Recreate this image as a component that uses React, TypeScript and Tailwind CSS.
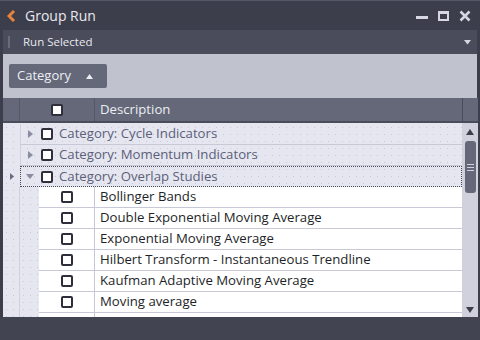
import React from "react";

const dots = {
  backgroundImage: "radial-gradient(circle, rgba(120,125,150,0.28) 0.6px, transparent 0.8px)",
  backgroundSize: "7px 7px",
};

function Box({ className = "" }: { className?: string }) {
  return <div className={"w-[12px] h-[12px] border-2 border-[#2e2f3a] rounded-[2px] bg-white " + className} />;
}

const children = [
  "Bollinger Bands",
  "Double Exponential Moving Average",
  "Exponential Moving Average",
  "Hilbert Transform - Instantaneous Trendline",
  "Kaufman Adaptive Moving Average",
  "Moving average",
];

const cats = [
  { t: "Category: Cycle Indicators", open: false },
  { t: "Category: Momentum Indicators", open: false },
  { t: "Category: Overlap Studies", open: true },
];

export default function App() {
  return (
    <div
      className="w-[480px] h-[340px] bg-[#3d3e4c] flex flex-col overflow-hidden text-[12px]"
      style={{ fontFamily: '"Open Sans", "Noto Sans", sans-serif' }}
    >
      {/* title bar */}
      <div className="h-[30px] flex items-center border-t border-[#555668] shrink-0">
        <svg width="10" height="12" viewBox="0 0 10 12" className="ml-[7px]">
          <path d="M7 1 L2 6 L7 11" stroke="#e9833a" strokeWidth="3" fill="none" />
        </svg>
        <span className="ml-[8px] text-[14px] text-[#e8e9f0]">Group Run</span>
        <div className="ml-auto flex items-center gap-[10px] mr-[9px]">
          <div className="w-[12px] h-[3px] bg-[#d6d7e0] mt-[4px]" />
          <div className="w-[11px] h-[10px] border-2 border-t-[3px] border-[#d6d7e0]" />
          <svg width="12" height="12" viewBox="0 0 12 12">
            <path d="M1.5 1.5 L10.5 10.5 M10.5 1.5 L1.5 10.5" stroke="#d6d7e0" strokeWidth="2.6" />
          </svg>
        </div>
      </div>
      {/* toolbar */}
      <div className="h-[24px] mx-[3px] bg-[#4a4b5b] flex items-center shrink-0">
        <div className="ml-[5px] w-[2px] h-[12px] border-l border-r border-[#6a6b7a]" />
        <span className="ml-[13px] text-[11.5px] text-[#e8e9f0]">Run Selected</span>
        <svg width="7" height="5" viewBox="0 0 7 5" className="ml-auto mr-[6px]">
          <path d="M0 0 H7 L3.5 4.5 Z" fill="#d6d7e0" />
        </svg>
      </div>
      {/* group panel */}
      <div className="h-[44px] mx-[3px] bg-[#c0c2cd] flex items-center pl-[6px] shrink-0">
        <div className="w-[98px] h-[24px] bg-[#646878] rounded-[2px] flex items-center pl-[8px] pr-[14px] text-[13px] text-[#eceef4]">
          Category
          <svg width="7" height="5" viewBox="0 0 7 5" className="ml-auto">
            <path d="M0 5 H7 L3.5 0 Z" fill="#eceef4" />
          </svg>
        </div>
      </div>
      {/* grid */}
      <div className="mx-[3px] flex flex-1 min-h-0 mr-[2px]">
        <div className="flex-1 flex flex-col min-w-0 bg-[#e5e6f0]">
          <div className="h-[25px] bg-[#646878] flex items-center border-b-2 border-[#4a4b5b] shrink-0">
            <div className="w-[17px] h-full border-r border-[#555868]" />
            <div className="w-[75px] h-full border-r border-[#555868] flex items-center justify-center">
              <Box />
            </div>
            <span className="ml-[5px] text-[13.2px] text-[#eceef4]">Description</span>
          </div>
          <div className="flex-1 overflow-hidden flex flex-col pt-px">
            {cats.map((c, i) => (
              <div key={i} className="h-[21px] flex shrink-0" style={dots}>
                <div className="w-[17px] flex items-center justify-center">
                  {c.open && (
                    <svg width="4" height="7" viewBox="0 0 4 7">
                      <path d="M0 0 L4 3.5 L0 7 Z" fill="#6a6c80" />
                    </svg>
                  )}
                </div>
                <div
                  className={
                    "flex-1 flex items-center border-b " +
                    (c.open ? "border border-dotted border-[#4a4b5b]" : "border-[#c8c9d6] border-l border-l-[#d0d1dc]")
                  }
                >
                  <div className="w-[16px] flex items-center justify-center ml-[1px]">
                    {c.open ? (
                      <svg width="8" height="5" viewBox="0 0 8 5">
                        <path d="M0 0 H8 L4 5 Z" fill="#8a8ca0" />
                      </svg>
                    ) : (
                      <svg width="5" height="8" viewBox="0 0 5 8">
                        <path d="M0 0 L5 4 L0 8 Z" fill="#8a8ca0" />
                      </svg>
                    )}
                  </div>
                  <Box className="ml-[3px]" />
                  <span className="ml-[6px] text-[13.2px] text-[#5c5f78]">{c.t}</span>
                </div>
              </div>
            ))}
            {children.concat([""]).map((t, i) => (
              <div key={i} className="h-[21px] flex shrink-0">
                <div className="w-[17px] border-r border-[#d0d1dc]" style={dots} />
                <div className="w-[19px]" style={dots} />
                <div className="w-[56px] bg-white border-b border-r border-[#c8c9d6] flex items-center justify-center">
                  <Box />
                </div>
                <div className="flex-1 bg-white border-b border-[#c8c9d6] flex items-center pl-[5px] text-[13.2px] text-[#1e1f28] whitespace-nowrap">
                  {t}
                </div>
              </div>
            ))}
          </div>
        </div>
        {/* scrollbar */}
        <div className="w-[16px] flex flex-col shrink-0">
          <div className="h-[25px] bg-[#646878] border-b-2 border-[#4a4b5b] border-l border-l-[#4a4b5b]" />
          <div className="flex-1 bg-[#d0d1dc] flex flex-col items-center">
            <svg width="8" height="6" viewBox="0 0 8 6" className="mt-[6px]">
              <path d="M0 6 H8 L4 0 Z" fill="#3d3e4c" />
            </svg>
            <div className="mt-[6px] w-[11px] h-[52px] bg-[#646878] rounded-[3px] flex flex-col items-center justify-center gap-[2px]">
              <div className="w-[7px] h-px bg-[#d0d1dc]" />
              <div className="w-[7px] h-px bg-[#d0d1dc]" />
              <div className="w-[7px] h-px bg-[#d0d1dc]" />
            </div>
            <svg width="8" height="6" viewBox="0 0 8 6" className="mt-auto mb-[4px]">
              <path d="M0 0 H8 L4 6 Z" fill="#3d3e4c" />
            </svg>
          </div>
        </div>
      </div>
      {/* bottom bar */}
      <div className="h-[23px] bg-[#434452] shrink-0" />
    </div>
  );
}
